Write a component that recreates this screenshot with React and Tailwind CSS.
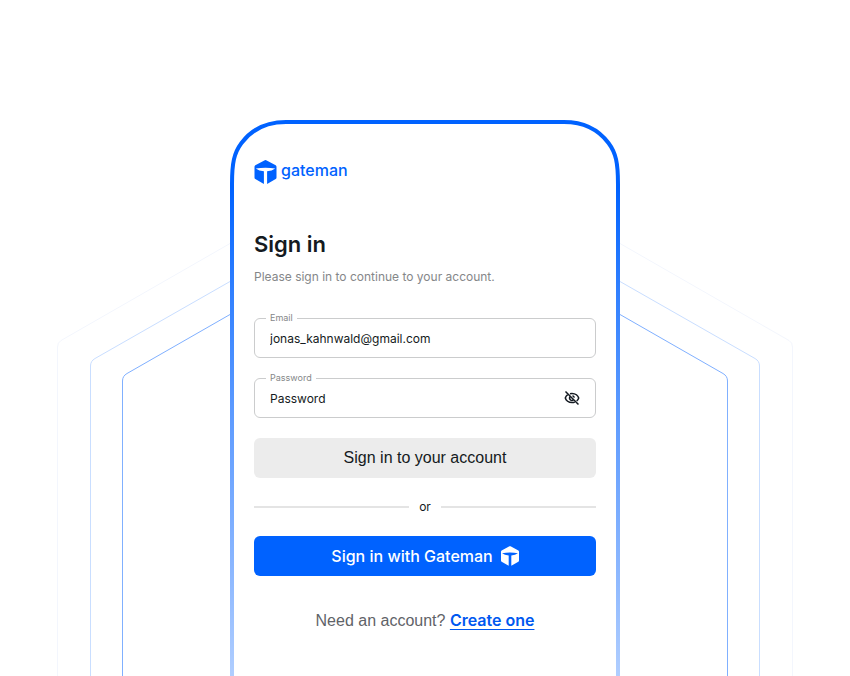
import { useId } from "react";

function CubeMark({ className }) {
  return (
    <svg viewBox="0 0 22 24" className={className} fill="currentColor" fillRule="evenodd" aria-hidden="true">
      <path d="M10.300 .2 Q11 -.1 11.700 .2 L21.200 5.300 Q22 5.800 22 6.800 V17.500 Q22 18.500 21.200 19 L12.600 24 V11.300 Q17.500 11 20.700 8.600 Q16 7.700 11 7.700 Q6 7.700 1.300 8.600 Q4.500 11 9.400 11.300 V24 L.8 19 Q0 18.500 0 17.500 V6.800 Q0 5.800 .8 5.300Z" />
    </svg>
  );
}

function EyeOff({ className }) {
  return (
    <svg viewBox="0 0 16 16" className={className} fill="none" stroke="currentColor" strokeWidth="1.5" aria-hidden="true">
      <path d="M1.500 1.500 14.500 14.500" />
      <path d="M6 3.700 Q7 3.400 8 3.400 C11.500 3.400 14.100 5.800 14.700 8 Q14.200 9.700 12.700 11" />
      <path d="M3.700 4.700 Q1.900 6 1.300 8 C1.900 10.200 4.500 12.600 8 12.600 Q9.600 12.600 10.800 12.100" />
      <path d="M6.300 6.500 A2.300 2.300 0 0 0 9.500 9.800" />
      <path d="M8.500 5.800 Q10 6.200 10.300 7.700" />
    </svg>
  );
}

function Backdrop() {
  return (
    <svg
      viewBox="0 0 850 676"
      className="pointer-events-none absolute top-0 left-1/2 h-[676px] w-[850px] -translate-x-1/2"
      fill="none"
      aria-hidden="true"
    >
      <defs>
        <linearGradient id="frame" gradientUnits="userSpaceOnUse" x1="0" y1="120" x2="0" y2="676">
          <stop offset="0" stopColor="#0062ff" />
          <stop offset="0.12" stopColor="#0062ff" />
          <stop offset="0.3" stopColor="#2f7fff" />
          <stop offset="0.52" stopColor="#5c9aff" />
          <stop offset="0.8" stopColor="#8ab6ff" />
          <stop offset="1" stopColor="#b0ceff" />
        </linearGradient>
      </defs>
      <g stroke="#f3f6fd">
        <path d="M230 243.500 L61 340.500 Q57.500 342.500 57.500 347 V676" />
        <path d="M620 243.500 L789 340.500 Q792.500 342.500 792.500 347 V676" />
      </g>
      <g stroke="#c9deff">
        <path d="M230 281.500 L95 358.500 Q90.500 361 90.500 366 V676" />
        <path d="M620 281.500 L755 358.500 Q759.500 361 759.500 366 V676" />
      </g>
      <g stroke="#80b0ff">
        <path d="M230 314.500 L127 373.500 Q122.500 376 122.500 381 V676" />
        <path d="M620 314.500 L723 373.500 Q727.500 376 727.500 381 V676" />
      </g>
      <path
        d="M232 680 V184 C232 163 234 153 241.500 143 C252 129 266 122 286 122 H564 C584 122 598 129 608.500 143 C616 153 618 163 618 184 V680"
        stroke="url(#frame)"
        strokeWidth="4"
      />
    </svg>
  );
}

function Field({ label, type, children, ...rest }) {
  const id = useId();
  return (
    <div className="relative">
      <label htmlFor={id} className="absolute -top-2 left-3 bg-white px-1 text-[9px] leading-4 text-[#858789]">
        {label}
      </label>
      <input
        id={id}
        type={type}
        className="h-10 w-full rounded-md border border-[#cbcccd] bg-transparent px-[15px] text-xs text-[#141a21] outline-none placeholder:text-[#141a21] placeholder:opacity-100"
        {...rest}
      />
      {children}
    </div>
  );
}

export default function App() {
  return (
    <div className="relative min-h-screen overflow-hidden bg-white font-['Inter','Liberation_Sans',sans-serif]">
      <Backdrop />
      <main className="relative mx-auto flex w-full max-w-[390px] flex-col px-6 pt-40">
        <div className="flex h-6 items-center gap-1 text-[#0062ff]">
          <CubeMark className="h-6 w-[23px]" />
          <span className="pb-1 text-base leading-5 font-medium">gateman</span>
        </div>

        <h1 className="mt-11 text-[22px] leading-8 font-semibold text-[#141a21]">Sign in</h1>
        <p className="mt-[7px] text-xs leading-5 text-[#858789]">Please sign in to continue to your account.</p>

        <form className="mt-[31px] flex flex-col gap-5" onSubmit={(e) => e.preventDefault()}>
          <Field label="Email" type="email" defaultValue="jonas_kahnwald@gmail.com" />
          <Field label="Password" type="password" placeholder="Password">
            <button type="button" aria-label="Show password" className="absolute top-3 right-4 text-[#141a21]">
              <EyeOff className="size-4" />
            </button>
          </Field>
          <button type="submit" className="h-10 rounded-md bg-[#ececec] font-['Liberation_Sans',Arial,sans-serif] text-base text-[#141a21]">
            Sign in to your account
          </button>
        </form>

        <div className="mt-5 flex h-[18px] items-center gap-2.5 text-xs leading-4 text-[#141a21]">
          <span className="h-0.5 flex-1 bg-[#e4e4e4]" />
          or
          <span className="h-0.5 flex-1 bg-[#e4e4e4]" />
        </div>

        <button
          type="button"
          className="mt-5 flex h-10 items-center justify-center gap-2 rounded-md bg-[#0062ff] text-base font-medium text-white"
        >
          Sign in with Gateman
          <CubeMark className="h-5 w-[18px]" />
        </button>

        <p className="mt-8 text-center font-['Liberation_Sans',Arial,sans-serif] text-base leading-6 text-[#5f6368]">
          Need an account?{" "}
          <a href="#create" className="font-['Inter',sans-serif] font-semibold text-[#0058f0] underline underline-offset-3">
            Create one
          </a>
        </p>
      </main>
    </div>
  );
}
